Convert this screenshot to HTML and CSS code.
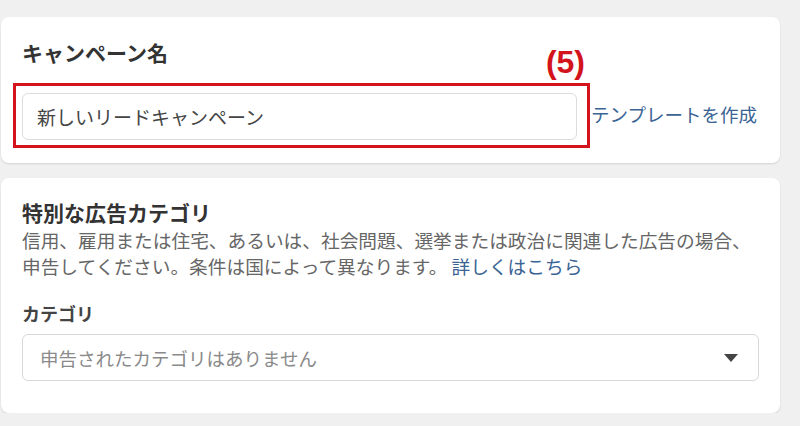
FILE: index.html
```html
<!DOCTYPE html>
<html lang="ja">
<head>
    <meta charset="UTF-8">
    <meta name="viewport" content="width=device-width, initial-scale=1.0">
    <title>キャンペーン名</title>
    <link rel="stylesheet" href="styles.css">
</head>
<body>
    <div class="page">
        <section class="card card-name">
            <h2 class="card-title">キャンペーン名</h2>
            <div class="name-row">
                <div class="field-wrap">
                    <input class="text-field" type="text" value="新しいリードキャンペーン">
                    <div class="mark"><span class="mark-num">(5)</span></div>
                </div>
                <a class="link" href="#">テンプレートを作成</a>
            </div>
        </section>
        <section class="card card-category">
            <h2 class="card-title">特別な広告カテゴリ</h2>
            <p class="desc">信用、雇用または住宅、あるいは、社会問題、選挙または政治に関連した広告の場合、<br>申告してください。条件は国によって異なります。 <a class="link" href="#">詳しくはこちら</a></p>
            <div class="label">カテゴリ</div>
            <div class="select">
                <span class="placeholder">申告されたカテゴリはありません</span>
                <span class="caret"></span>
            </div>
        </section>
    </div>
</body>
</html>
```

FILE: styles.css
```css
*{box-sizing:border-box;margin:0;padding:0;}
body{background:#f0f0f0;font-family:"Noto Sans CJK JP","Liberation Sans",sans-serif;color:#333;}
.page{display:flex;flex-direction:column;gap:15px;width:780px;padding:17px 0 0 1px;}
.card{background:#fff;border-radius:8px;box-shadow:0 1px 2px rgba(0,0,0,.12);padding:22px 21px 23px;}
.card-title{font-size:21px;line-height:26px;font-weight:bold;color:#333;}
.card-name .card-title{margin-bottom:28px;}
.name-row{display:flex;align-items:center;gap:14px;}
.field-wrap{position:relative;width:555px;}
.text-field{display:block;width:100%;height:47px;padding:0 14px;border:1px solid #dcdcdc;border-radius:6px;font-family:inherit;font-size:19px;color:#444;outline:none;}
.mark{position:absolute;top:-10px;left:-9px;right:-13px;bottom:-8px;border:3px solid #d3141c;pointer-events:none;}
.mark-num{position:absolute;right:2px;bottom:calc(100% + 7px);font-family:"Liberation Sans",sans-serif;font-size:32px;line-height:34px;font-weight:bold;color:#d3141c;}
.link{color:#3b6494;text-decoration:none;font-size:18.5px;}
.name-row .link{padding-bottom:6px;}
.card-category{padding:21px 21px 32px;}
.card-category .card-title{margin-bottom:2px;}
.desc{font-size:18.7px;line-height:26px;color:#666;white-space:nowrap;}
.desc .link{font-size:18.7px;}
.label{margin-top:21px;font-size:18px;line-height:26px;font-weight:600;color:#444;}
.select{display:flex;align-items:center;justify-content:space-between;height:47px;margin-top:8px;padding:0 20px 0 17px;border:1px solid #d8d8d8;border-radius:6px;}
.placeholder{font-size:18.5px;color:#8a8a8a;}
.caret{width:0;height:0;border-left:7px solid transparent;border-right:7px solid transparent;border-top:8px solid #444;}
```
